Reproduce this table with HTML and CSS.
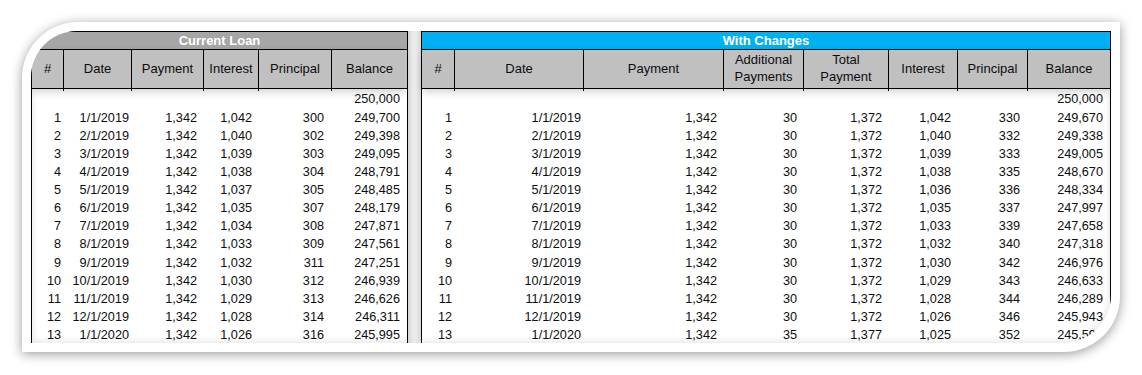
FILE: index.html
```html
<!DOCTYPE html>
<html>
<head>
<meta charset="utf-8">
<link rel="stylesheet" href="styles.css">
</head>
<body>
<div class="frame">
  <div class="shot">
    <div class="tbl left">
      <div class="title gray">Current Loan</div>
      <div class="head cols-l">
        <div class="h">#</div><div class="h">Date</div><div class="h">Payment</div><div class="h">Interest</div><div class="h">Principal</div><div class="h">Balance</div>
      </div>
      <div class="rows cols-l">
        <div class="t"></div><div class="t"></div><div class="t"></div><div class="t"></div><div class="t"></div><div>250,000</div>
        <div class="c">1</div><div class="c">1/1/2019</div><div>1,342</div><div>1,042</div><div class="p">300</div><div>249,700</div>
        <div class="c">2</div><div class="c">2/1/2019</div><div>1,342</div><div>1,040</div><div class="p">302</div><div>249,398</div>
        <div class="c">3</div><div class="c">3/1/2019</div><div>1,342</div><div>1,039</div><div class="p">303</div><div>249,095</div>
        <div class="c">4</div><div class="c">4/1/2019</div><div>1,342</div><div>1,038</div><div class="p">304</div><div>248,791</div>
        <div class="c">5</div><div class="c">5/1/2019</div><div>1,342</div><div>1,037</div><div class="p">305</div><div>248,485</div>
        <div class="c">6</div><div class="c">6/1/2019</div><div>1,342</div><div>1,035</div><div class="p">307</div><div>248,179</div>
        <div class="c">7</div><div class="c">7/1/2019</div><div>1,342</div><div>1,034</div><div class="p">308</div><div>247,871</div>
        <div class="c">8</div><div class="c">8/1/2019</div><div>1,342</div><div>1,033</div><div class="p">309</div><div>247,561</div>
        <div class="c">9</div><div class="c">9/1/2019</div><div>1,342</div><div>1,032</div><div class="p">311</div><div>247,251</div>
        <div class="c">10</div><div class="c">10/1/2019</div><div>1,342</div><div>1,030</div><div class="p">312</div><div>246,939</div>
        <div class="c">11</div><div class="c">11/1/2019</div><div>1,342</div><div>1,029</div><div class="p">313</div><div>246,626</div>
        <div class="c">12</div><div class="c">12/1/2019</div><div>1,342</div><div>1,028</div><div class="p">314</div><div>246,311</div>
        <div class="c">13</div><div class="c">1/1/2020</div><div>1,342</div><div>1,026</div><div class="p">316</div><div>245,995</div>
      </div>
    </div>
    <div class="gap"></div>
    <div class="tbl right">
      <div class="title blue">With Changes</div>
      <div class="head cols-r">
        <div class="h">#</div><div class="h">Date</div><div class="h">Payment</div><div class="h">Additional<br>Payments</div><div class="h">Total<br>Payment</div><div class="h">Interest</div><div class="h">Principal</div><div class="h">Balance</div>
      </div>
      <div class="rows cols-r">
        <div class="t"></div><div class="t"></div><div class="t"></div><div class="t"></div><div class="t"></div><div class="t"></div><div class="t"></div><div>250,000</div>
        <div class="c">1</div><div class="c">1/1/2019</div><div>1,342</div><div>30</div><div>1,372</div><div>1,042</div><div class="p">330</div><div>249,670</div>
        <div class="c">2</div><div class="c">2/1/2019</div><div>1,342</div><div>30</div><div>1,372</div><div>1,040</div><div class="p">332</div><div>249,338</div>
        <div class="c">3</div><div class="c">3/1/2019</div><div>1,342</div><div>30</div><div>1,372</div><div>1,039</div><div class="p">333</div><div>249,005</div>
        <div class="c">4</div><div class="c">4/1/2019</div><div>1,342</div><div>30</div><div>1,372</div><div>1,038</div><div class="p">335</div><div>248,670</div>
        <div class="c">5</div><div class="c">5/1/2019</div><div>1,342</div><div>30</div><div>1,372</div><div>1,036</div><div class="p">336</div><div>248,334</div>
        <div class="c">6</div><div class="c">6/1/2019</div><div>1,342</div><div>30</div><div>1,372</div><div>1,035</div><div class="p">337</div><div>247,997</div>
        <div class="c">7</div><div class="c">7/1/2019</div><div>1,342</div><div>30</div><div>1,372</div><div>1,033</div><div class="p">339</div><div>247,658</div>
        <div class="c">8</div><div class="c">8/1/2019</div><div>1,342</div><div>30</div><div>1,372</div><div>1,032</div><div class="p">340</div><div>247,318</div>
        <div class="c">9</div><div class="c">9/1/2019</div><div>1,342</div><div>30</div><div>1,372</div><div>1,030</div><div class="p">342</div><div>246,976</div>
        <div class="c">10</div><div class="c">10/1/2019</div><div>1,342</div><div>30</div><div>1,372</div><div>1,029</div><div class="p">343</div><div>246,633</div>
        <div class="c">11</div><div class="c">11/1/2019</div><div>1,342</div><div>30</div><div>1,372</div><div>1,028</div><div class="p">344</div><div>246,289</div>
        <div class="c">12</div><div class="c">12/1/2019</div><div>1,342</div><div>30</div><div>1,372</div><div>1,026</div><div class="p">346</div><div>245,943</div>
        <div class="c">13</div><div class="c">1/1/2020</div><div>1,342</div><div>35</div><div>1,377</div><div>1,025</div><div class="p">352</div><div>245,591</div>
      </div>
    </div>
  </div>
</div>
</body>
</html>
```
FILE: styles.css
```css
html, body {
  margin: 0;
  background: #ffffff;
}
body {
  padding: 22px;
  font-family: "Liberation Sans", Arial, sans-serif;
  color: #0d0d0d;
}
.frame {
  width: 1080px;
  padding: 9px;
  background: #ffffff;
  border-radius: 56px 0 56px 0;
  box-shadow: 0 2px 12px rgba(0, 0, 0, 0.4);
}
.shot {
  display: flex;
  height: 312px;
  overflow: hidden;
  border-radius: 46px 0 48px 0;
  background: #ffffff;
  box-shadow: inset 0 0 9px rgba(0, 0, 0, 0.14);
}
.tbl {
  box-sizing: border-box;
  display: flex;
  flex-direction: column;
  border-left: 1px solid #000;
  border-right: 1px solid #000;
}
.left { width: 377px; flex: 0 0 377px; }
.right { width: 690px; flex: 0 0 690px; }
.gap {
  flex: 0 0 13px;
  background: linear-gradient(to right, #d4d4d4, #ebebeb 40%, #ebebeb 60%, #d8d8d8);
}
.title {
  height: 17px;
  border-top: 1px solid #000;
  border-bottom: 1px solid #000;
  color: #fff;
  font-weight: bold;
  font-size: 13px;
  line-height: 17px;
  text-align: center;
}
.gray { background: #a6a6a6; }
.blue { background: #00b0f0; }
.cols-l { display: grid; grid-template-columns: 32px 68px 72px 55px 73px 75px; }
.cols-r { display: grid; grid-template-columns: 33px 129px 140px 80px 85px 69px 70px 82px; }
.head {
  height: 38px;
  background: #c0c0c0;
  border-bottom: 1px solid #000;
  box-shadow: 0 3px 8px rgba(0, 0, 0, 0.18);
}
.h {
  box-sizing: border-box;
  display: flex;
  align-items: center;
  justify-content: center;
  text-align: center;
  font-size: 13px;
  line-height: 16.5px;
  border-right: 1px solid #000;
}
.h:last-child { border-right: none; }
.rows {
  grid-template-rows: 19px;
  grid-auto-rows: 18.1px;
  font-size: 12.7px;
  line-height: 18px;
}
.rows > div {
  box-sizing: border-box;
  text-align: right;
  padding-right: 7px;
  padding-top: 1px;
  white-space: nowrap;
}
.rows > .c { padding-right: 3px; }
.rows > .p { padding-right: 8px; }
.rows > .t {
  background: linear-gradient(#000, #000) right top / 1px 2px no-repeat;
}
```
